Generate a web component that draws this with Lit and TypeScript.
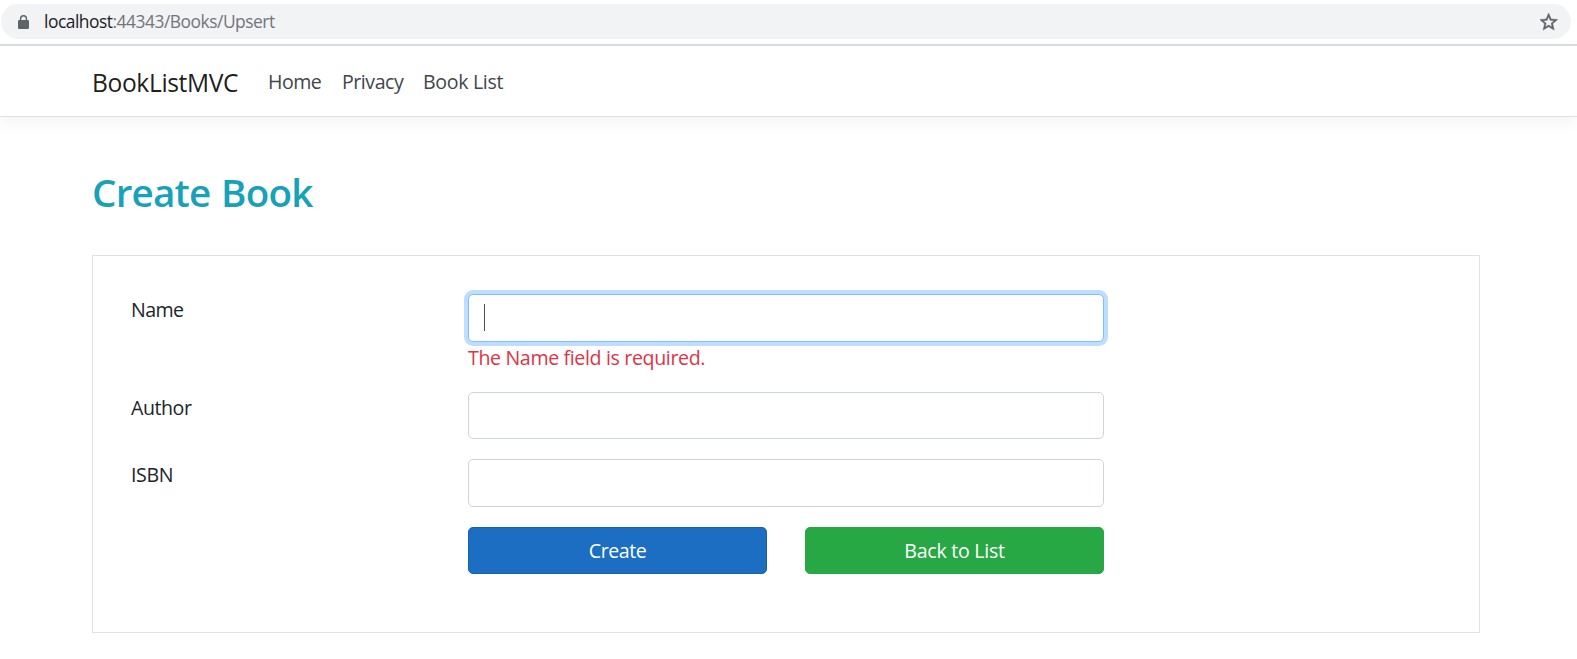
import { LitElement, html, css, nothing } from "lit";
import { customElement, property, state } from "lit/decorators.js";

@customElement("address-bar")
class AddressBar extends LitElement {
  static styles = css`
    :host {
      display: block;
      padding: 4px 6px 5px 1px;
      border-bottom: 2px solid #dadce3;
    }
    .pill {
      display: flex;
      align-items: center;
      height: 35px;
      box-sizing: border-box;
      padding: 0 13px 0 17px;
      border-radius: 18px;
      background: #f1f3f4;
    }
    .lock {
      width: 11px;
      height: 14px;
      margin-right: 15px;
    }
    .url {
      flex: 1;
      font-size: 17.4px;
      line-height: 35px;
      letter-spacing: -0.48px;
      color: #73767a;
    }
    .host {
      color: #202124;
    }
    .star {
      width: 18px;
      height: 18px;
    }
  `;
  render() {
    return html`
      <div class="pill">
        <svg class="lock" viewBox="0 0 11 14">
          <path d="M2.6 6V3.7a2.9 2.9 0 0 1 5.8 0V6" fill="none" stroke="#5f6368" stroke-width="1.4" />
          <rect x="0" y="5" width="11" height="9" rx="1.2" fill="#5f6368" />
        </svg>
        <span class="url"><span class="host">localhost</span>:44343/Books/Upsert</span>
        <svg class="star" viewBox="2.4 2 20 20">
          <path
            fill="#5f6368"
            stroke="#5f6368"
            stroke-width="0.5"
            d="M22 9.24l-7.19-.62L12 2 9.19 8.63 2 9.24l5.46 4.73L5.82 21 12 17.27 18.18 21l-1.63-7.03L22 9.24zM12 15.4l-3.76 2.27 1-4.28-3.32-2.88 4.38-.38L12 6.1l1.71 4.04 4.38.38-3.32 2.88 1 4.28L12 15.4z"
          />
        </svg>
      </div>
    `;
  }
}

@customElement("site-nav")
class SiteNav extends LitElement {
  static styles = css`
    :host {
      display: block;
      background: #fff;
      border-bottom: 1px solid #dee2e6;
      box-shadow: 0 5px 15px rgba(0, 0, 0, 0.05);
    }
    nav {
      display: flex;
      align-items: flex-start;
      height: 70px;
      padding-left: 92px;
    }
    .brand {
      width: 176px;
      font-size: 24.6px;
      line-height: 74px;
      letter-spacing: -0.37px;
      color: rgba(0, 0, 0, 0.9);
    }
    .link {
      font-size: 19.6px;
      line-height: 72px;
      color: #41464b;
    }
    .home {
      width: 74px;
      letter-spacing: -0.5px;
    }
    .privacy {
      width: 81px;
      letter-spacing: -0.47px;
    }
    .books {
      letter-spacing: -0.33px;
    }
  `;
  render() {
    return html`
      <nav>
        <span class="brand">BookListMVC</span>
        <span class="link home">Home</span>
        <span class="link privacy">Privacy</span>
        <span class="link books">Book List</span>
      </nav>
    `;
  }
}

@customElement("form-row")
class FormRow extends LitElement {
  static styles = css`
    :host {
      display: grid;
      grid-template-columns: 337px 636px;
    }
    .label {
      line-height: 30px;
      padding-top: 1px;
      letter-spacing: var(--label-spacing, -0.6px);
      color: #212529;
    }
    .input {
      display: flex;
      align-items: center;
      box-sizing: border-box;
      height: var(--field-height, 48px);
      padding-left: 15px;
      border: 1px solid #ced4da;
      border-radius: 5px;
      background: #fff;
    }
    .focused {
      border-color: #80bdff;
      box-shadow: 0 0 0 4px #bfdeff;
    }
    .caret {
      width: 1px;
      height: 27px;
      margin-bottom: 1px;
      background: #495057;
    }
    .error {
      height: 30px;
      line-height: 32px;
      letter-spacing: -0.36px;
      color: #dc3545;
    }
  `;
  @property() label = "";
  @property() error = "";
  @property({ type: Boolean }) focused = false;
  render() {
    return html`
      <div class="label">${this.label}</div>
      <div>
        <div class="input ${this.focused ? "focused" : ""}">
          ${this.focused ? html`<span class="caret"></span>` : nothing}
        </div>
        ${this.error ? html`<div class="error">${this.error}</div>` : nothing}
      </div>
    `;
  }
}

@customElement("app-root")
class AppRoot extends LitElement {
  static styles = css`
    :host {
      display: block;
      height: 659px;
      overflow: hidden;
      background: #fff;
      font-family: "Open Sans", "Noto Sans", sans-serif;
      font-weight: 400;
      font-size: 19.6px;
      line-height: 30px;
      white-space: nowrap;
    }
    main {
      padding: 51px 97px 0 92px;
    }
    h2 {
      margin: 0 0 39px;
      font-size: 38.6px;
      font-weight: 600;
      line-height: 48px;
      letter-spacing: -0.8px;
      word-spacing: 1.5px;
      color: #17a2b8;
    }
    .panel {
      box-sizing: border-box;
      height: 378px;
      padding: 38px 38px 0;
      border: 1px solid #dee2e6;
    }
    .name {
      margin-bottom: 20px;
    }
    .author {
      --label-spacing: -0.45px;
      --field-height: 47px;
      margin-bottom: 20px;
    }
    .isbn {
      --label-spacing: -0.35px;
      margin-bottom: 20px;
    }
    .buttons {
      display: grid;
      grid-template-columns: 299px 299px;
      gap: 38px;
      padding-left: 337px;
    }
    .button {
      box-sizing: border-box;
      height: 47px;
      border: 1px solid;
      border-radius: 5px;
      text-align: center;
      line-height: 46px;
      color: #fff;
    }
    .create {
      background: #1b6ec2;
      border-color: #1861ac;
      letter-spacing: -0.45px;
    }
    .back {
      background: #28a745;
      border-color: #28a745;
      letter-spacing: -0.28px;
    }
  `;
  @state() heading = "Create Book";
  render() {
    return html`
      <address-bar></address-bar>
      <site-nav></site-nav>
      <main>
        <h2>${this.heading}</h2>
        <div class="panel">
          <form-row class="name" label="Name" error="The Name field is required." focused></form-row>
          <form-row class="author" label="Author"></form-row>
          <form-row class="isbn" label="ISBN"></form-row>
          <div class="buttons">
            <div class="button create">Create</div>
            <div class="button back">Back to List</div>
          </div>
        </div>
      </main>
    `;
  }
}
